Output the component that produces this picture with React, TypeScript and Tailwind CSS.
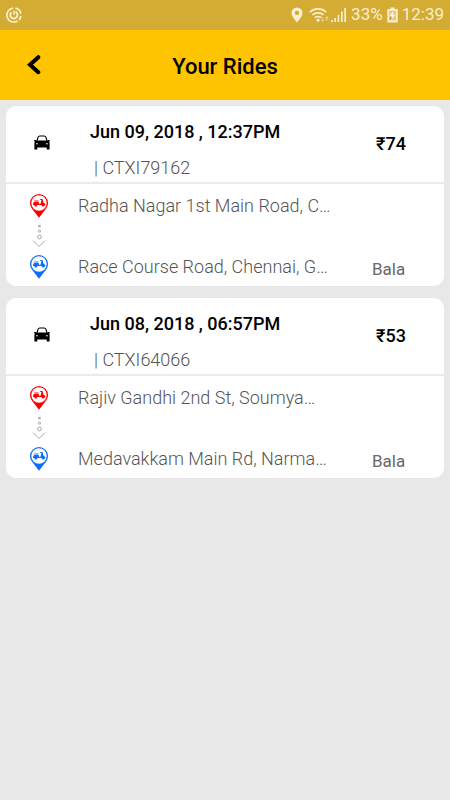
interface Ride {
  id: string;
  date: string;
  fare: number;
  from: string;
  to: string;
  driver: string;
}

const rides: Ride[] = [
  {
    id: "CTXI79162",
    date: "Jun 09, 2018 , 12:37PM",
    fare: 74,
    from: "Radha Nagar 1st Main Road, C…",
    to: "Race Course Road, Chennai, G…",
    driver: "Bala",
  },
  {
    id: "CTXI64066",
    date: "Jun 08, 2018 , 06:57PM",
    fare: 53,
    from: "Rajiv Gandhi 2nd St, Soumya…",
    to: "Medavakkam Main Rd, Narma…",
    driver: "Bala",
  },
];

function App() {
  return (
    <div className="min-h-screen bg-[#e8e8e8] font-['Roboto',sans-serif]">
      <StatusBar />
      <Header />
      <main className="flex flex-col gap-3 px-1.5 pt-1.5">
        {rides.map((ride) => (
          <RideCard key={ride.id} ride={ride} />
        ))}
      </main>
    </div>
  );
}

function StatusBar() {
  return (
    <div className="flex h-[30px] items-center justify-between bg-[#d4ac33] px-1.5 text-[17px] text-[#faefcf]">
      <svg width="16" height="16" viewBox="0 0 16 16" fill="none" stroke="currentColor">
        <path d="M9.400 1.100A7 7 0 0 1 14.900 6.600M14.900 9A7 7 0 0 1 13 12.800M11.700 13.900A7 7 0 1 1 7 1.100" strokeWidth="1.700" />
        <path d="M5.400 5.200A3.600 3.600 0 1 0 9.500 4.700" strokeWidth="1.900" />
        <path d="M8 3.800v4" strokeWidth="1.500" />
      </svg>
      <div className="flex items-center gap-1">
        <svg width="12" height="16" viewBox="0 0 12 16" fill="currentColor">
          <path fillRule="evenodd" d="M6 .5A5.500 5.500 0 0 0 .5 6C.5 9.600 6 15.500 6 15.500s5.500-5.900 5.500-9.500A5.500 5.500 0 0 0 6 .5zm0 3.200a2.200 2.200 0 1 1 0 4.400 2.200 2.200 0 0 1 0-4.400z" />
        </svg>
        <svg className="-mr-0.5 ml-0.5" width="20" height="16" viewBox="0 0 20 16" fill="none" stroke="currentColor">
          <path d="M.8 5.200a12 12 0 0 1 16.400 0M3.400 8a8.200 8.200 0 0 1 11.200 0M5.900 10.700a4.600 4.600 0 0 1 6.200 0" strokeWidth="1.700" />
          <path d="M9 11.200l2 2-2 2-2-2z" fill="currentColor" stroke="none" />
          <path d="M11.800 12.500l1.900 2.500 1.900-2.500zM13.200 10h1v3h-1zM16 11.500L18 9l1.900 2.500zM17.400 11.500h1V14h-1z" fill="currentColor" stroke="none" opacity=".6" />
        </svg>
        <svg width="16" height="16" viewBox="0 0 16 16" fill="currentColor">
          <path d="M0 13h1.800v2H0zM3.300 11h1.700v4H3.300zM6.600 8h1.700v7H6.600zM10 4.500h1.700V15H10zM13.300 1H15v14h-1.700z" />
        </svg>
        <span>33%</span>
        <svg width="11" height="16" viewBox="0 0 11 16">
          <path d="M3.500.5h4V2H10a.7.7 0 0 1 .7.700v12a.7.7 0 0 1-.7.700H1a.7.7 0 0 1-.7-.700v-12A.7.7 0 0 1 1 2h2.500z" fill="currentColor" />
          <path d="M2 3.800h7v9.600H2z" fill="#e4cb7c" />
          <path d="M6.500 3.800L2.300 9h2.500l-1 4.200L8.500 7.800H5.900z" fill="currentColor" />
          <path d="M3 10.200l1.500.300-.8 2.500z" fill="#6f5c23" />
        </svg>
        <span>12:39</span>
      </div>
    </div>
  );
}

function Header() {
  return (
    <header className="grid h-[70px] grid-cols-[68px_1fr_68px] items-center bg-[#ffc400]">
      <button type="button" aria-label="Back" className="flex h-full items-center justify-center">
        <svg width="14" height="22" viewBox="0 0 14 22" fill="none" stroke="#000" strokeWidth="4">
          <path d="M11.300 3.200L3 10.700l8.300 7.500" strokeLinecap="round" />
        </svg>
      </button>
      <h1 className="pt-0.5 text-center text-[22px] font-medium text-black">Your Rides</h1>
    </header>
  );
}

function RideCard({ ride }: { ride: Ride }) {
  return (
    <article className="rounded-[10px] bg-white text-lg leading-6 text-[#555]">
      <div className="grid grid-cols-[72px_1fr_100px] border-b-2 border-[#ebebeb] pt-3.5 pb-0.5">
        <div className="flex justify-center pt-[15px]">
          <CarIcon />
        </div>
        <div className="pl-3">
          <h2 className="font-medium text-black">{ride.date}</h2>
          <p className="mt-3 pl-1 font-light">| {ride.id}</p>
        </div>
        <p className="pt-3 pl-8 text-lg leading-6 font-medium text-black">₹{ride.fare}</p>
      </div>
      <div className="grid grid-cols-[72px_1fr_100px] pt-2.5 pb-[7px]">
        <div className="flex flex-col items-center pr-1.5">
          <PinIcon color="#f00" />
          <DotsIcon />
          <PinIcon color="#0a70f8" />
        </div>
        <div className="flex flex-col justify-between font-light">
          <p className="whitespace-nowrap">{ride.from}</p>
          <p className="whitespace-nowrap">{ride.to}</p>
        </div>
        <p className="self-end pl-7 text-[17px] leading-5 text-[#666]">{ride.driver}</p>
      </div>
    </article>
  );
}

function CarIcon() {
  return (
    <svg width="16" height="15" viewBox="0 0 16 15">
      <path d="M2.900 6L4 2.400C4.300 1.400 4.800 1 5.800 1h4.400c1 0 1.500.4 1.800 1.400L13.100 6" fill="none" stroke="#000" strokeWidth="1.100" />
      <path fillRule="evenodd" d="M.2 5h1.600l.6.600h11.200l.6-.6h1.600v1.300h-.9c.5.500.7 1.100.7 1.700v6.400h-2.900v-2H3.300v2H.4V8c0-.6.200-1.200.7-1.700H.2zM3 8a.8.8 0 1 0 0 1.600A.8.8 0 0 0 3 8zm10 0a.8.8 0 1 0 0 1.600.8.8 0 0 0 0-1.600z" />
    </svg>
  );
}

function PinIcon({ color }: { color: string }) {
  return (
    <svg width="18" height="24" viewBox="0 0 18 24" fill={color}>
      <path d="M9 0a9 9 0 0 0-9 9c0 2.600 1.300 5 3.200 7.200L9 23.800l5.800-7.600C16.700 14 18 11.600 18 9a9 9 0 0 0-9-9z" />
      <circle cx="9" cy="9" r="7.700" fill="#fff" />
      <path d="M4.200 8h4.600v1.700h1.700l1-3.600h-1.300V5h2.400l1 3.900c1.200.1 1.800.9 1.800 2.100h-.6a1.500 1.500 0 0 1-3 0H7.300a1.500 1.500 0 0 1-3 0H3c0-1.400.3-2.400 1.200-3zM4.300 6.400h4.200v1.100H4.300z" />
    </svg>
  );
}

function DotsIcon() {
  return (
    <svg className="my-1.5" width="14" height="25" viewBox="0 0 14 25" fill="none" stroke="#aaa">
      <circle cx="7.500" cy="2" r="1.300" fill="#aaa" stroke="none" />
      <circle cx="7.500" cy="7" r="1.100" />
      <circle cx="7.500" cy="13" r="1.900" />
      <path d="M1 16.500l6 6 6-6" />
    </svg>
  );
}

export default App;
